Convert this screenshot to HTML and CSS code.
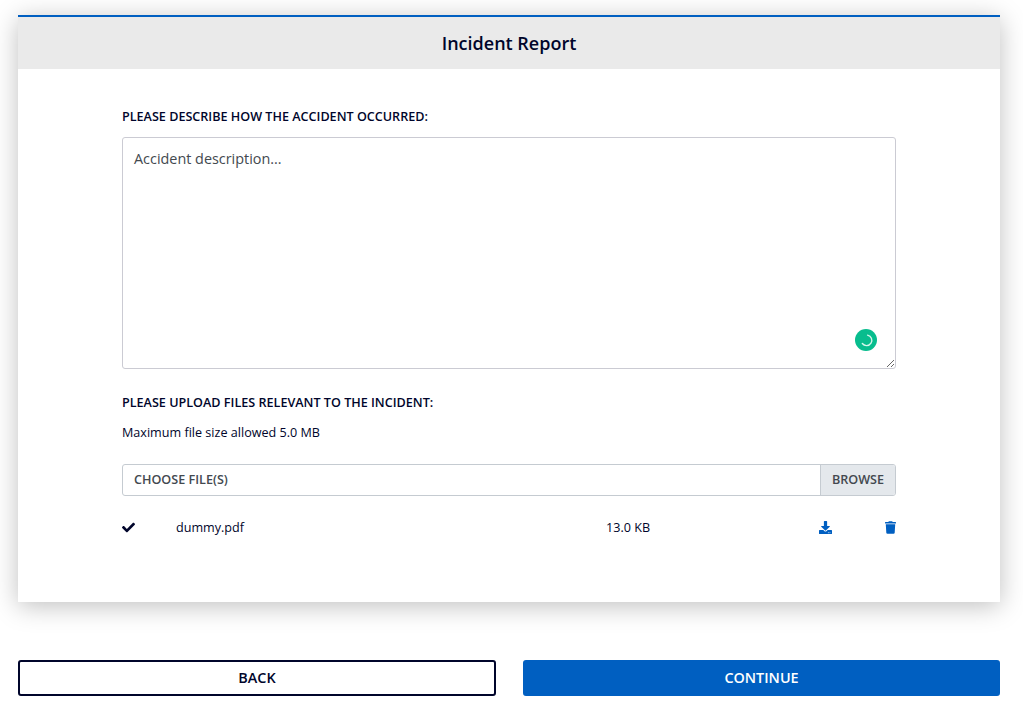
FILE: index.html
```html
<!DOCTYPE html>
<html lang="en">
<head>
<meta charset="utf-8">
<title>Incident Report</title>
<link rel="stylesheet" href="styles.css">
</head>
<body>
<main class="page">
  <section class="card">
    <h1 class="card-title">Incident Report</h1>
    <div class="card-body">
      <label class="label" for="description">PLEASE DESCRIBE HOW THE ACCIDENT OCCURRED:</label>
      <div class="description">
        <textarea class="textarea" id="description" placeholder="Accident description..." spellcheck="false"></textarea>
        <svg class="checker" viewBox="0 0 22 22"><circle cx="11" cy="11" r="11" fill="#08bd8e"/><path d="M12.6 6.1a5.3 5.3 0 1 1-5.3 8.4" fill="none" stroke="#d5f6eb" stroke-width="1.4" stroke-linecap="round"/></svg>
      </div>
      <div class="label upload-label">PLEASE UPLOAD FILES RELEVANT TO THE INCIDENT:</div>
      <p class="hint">Maximum file size allowed 5.0 MB</p>
      <div class="picker">
        <span class="picker-text">CHOOSE FILE(S)</span>
        <span class="browse">BROWSE</span>
      </div>
      <div class="file">
        <svg class="icon check" viewBox="0 0 512 512"><path d="M173.9 439.4 7.5 273c-10-10-10-26.200 0-36.200l36.200-36.200c10-10 26.200-10 36.200 0L192 312.700 432.100 72.600c10-10 26.200-10 36.200 0l36.200 36.200c10 10 10 26.200 0 36.200L210.100 439.400c-10 10-26.200 10-36.200 0z"/></svg>
        <span class="file-name">dummy.pdf</span>
        <span class="file-size">13.0 KB</span>
        <svg class="icon download" viewBox="0 0 512 512"><path d="M216 0h80c13.300 0 24 10.700 24 24v168h87.700c17.800 0 26.700 21.500 14.100 34.100L269.700 378.300c-7.500 7.500-19.800 7.500-27.300 0L90.100 226.100c-12.600-12.600-3.700-34.100 14.100-34.100H192V24c0-13.300 10.700-24 24-24zm296 376v112c0 13.300-10.700 24-24 24H24c-13.300 0-24-10.700-24-24V376c0-13.300 10.700-24 24-24h146.700l49 49c20.100 20.100 52.500 20.100 72.600 0l49-49H488c13.300 0 24 10.700 24 24zm-124 88c0-11-9-20-20-20s-20 9-20 20 9 20 20 20 20-9 20-20zm64 0c0-11-9-20-20-20s-20 9-20 20 9 20 20 20 20-9 20-20z"/></svg>
        <svg class="icon trash" viewBox="0 0 448 512"><path d="M432 32H312l-9.400-18.700A24 24 0 0 0 281.100 0H166.800a23.700 23.700 0 0 0-21.400 13.300L136 32H16A16 16 0 0 0 0 48v32a16 16 0 0 0 16 16h416a16 16 0 0 0 16-16V48a16 16 0 0 0-16-16zM53.200 467a48 48 0 0 0 47.900 45h245.800a48 48 0 0 0 47.900-45L416 128H32z"/></svg>
      </div>
    </div>
  </section>
  <div class="actions">
    <button class="btn back">BACK</button>
    <button class="btn continue">CONTINUE</button>
  </div>
</main>
</body>
</html>
```
FILE: styles.css
```css
* { box-sizing: border-box; }
body {
  margin: 0;
  background: #fff;
  color: #00052b;
  font-family: "Open Sans", sans-serif;
  font-size: 12.6px;
}
.page { padding: 15px 23px 0 18px; }
.card {
  height: 587px;
  border-top: 2px solid #005fc1;
  background: #fff;
  box-shadow: 0 4px 24px rgba(0, 0, 0, .25);
}
.card-title {
  margin: 0;
  height: 52px;
  background: #eaeaea;
  font-size: 18px;
  font-weight: 600;
  line-height: 53px;
  text-align: center;
}
.card-body { padding: 38px 104px 0; }
.label {
  display: block;
  font-size: 12.6px;
  font-weight: 600;
  line-height: 20px;
}
.description { position: relative; height: 232px; margin-top: 10px; }
.textarea {
  display: block;
  width: 100%;
  height: 232px;
  padding: 11px;
  border: 1px solid #cbcbd3;
  border-radius: 3px;
  outline: 0;
  background: #fff;
  font: 14.4px/20px "Open Sans", sans-serif;
}
.textarea::placeholder { color: #43494f; opacity: 1; }
.checker { position: absolute; right: 19px; bottom: 18px; width: 22px; height: 22px; }
.upload-label { margin-top: 24px; }
.hint { margin: 10px 0 21px; line-height: 20px; }
.picker {
  display: flex;
  height: 32px;
  border: 1px solid #c5cbd1;
  border-radius: 3px;
  overflow: hidden;
  color: #43494f;
  font-weight: 600;
  line-height: 30px;
}
.picker-text { flex: 1; padding-left: 11px; }
.browse { width: 75px; border-left: 1px solid #c5cbd1; background: #e4e8ec; text-align: center; }
.file {
  display: grid;
  grid-template-columns: 54px 430px 213px 66px 13px;
  align-items: center;
  height: 20px;
  margin-top: 21px;
}
.icon { display: block; height: 13px; fill: #005fc1; }
.check { width: 13px; fill: #00052b; }
.download { width: 13px; }
.trash { width: 11px; }
.actions { display: grid; grid-template-columns: 478px 477px; gap: 27px; margin-top: 58px; }
.btn {
  height: 36px;
  padding: 0;
  border: 2px solid #00052b;
  border-radius: 3px;
  background: #fff;
  color: #00052b;
  font: 600 14.4px/20px "Open Sans", sans-serif;
}
.continue { border-color: #005fc1; background: #005fc1; color: #fff; }
```
